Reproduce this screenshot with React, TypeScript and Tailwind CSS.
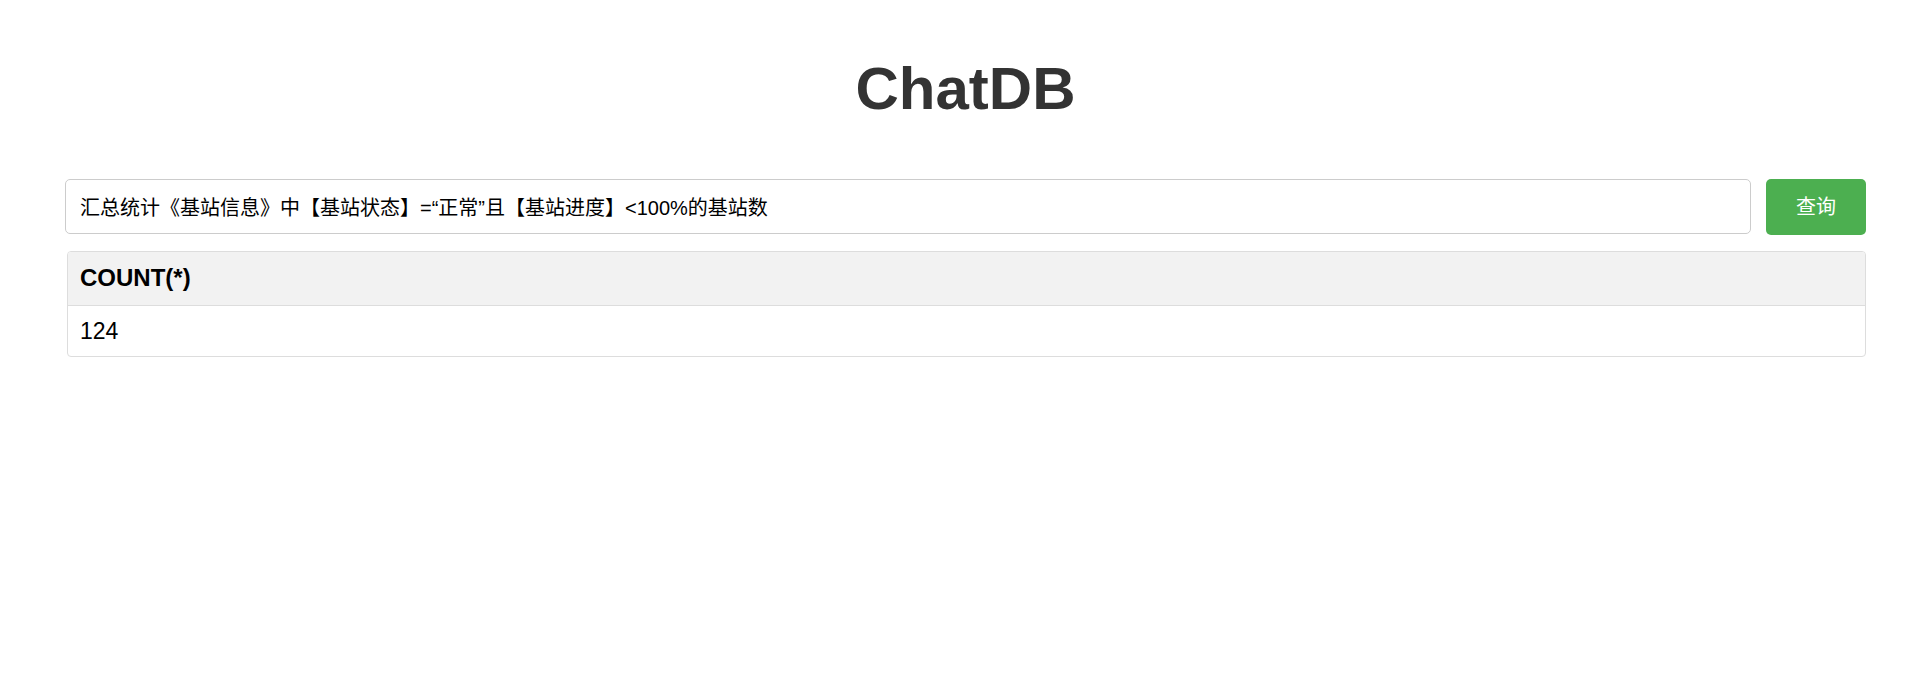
import React, { useState } from 'react';

const font = { fontFamily: '"Liberation Sans", "Noto Sans CJK SC", Arial, sans-serif' };

const App = () => {
  const [query, setQuery] = useState('汇总统计《基站信息》中【基站状态】=“正常”且【基站进度】<100%的基站数');
  const columns = ['COUNT(*)'];
  const rows = [[124]];

  return (
    <div className="min-h-screen bg-white" style={font}>
      <div className="w-[1801px] mx-auto">
        <h1 className="text-center text-[60px] leading-[67px] font-bold text-[#333] pt-[55px] mb-[57px]">ChatDB</h1>

        <div className="flex items-start gap-[15px]">
          <input
            value={query}
            onChange={(e) => setQuery(e.target.value)}
            className="flex-1 h-[55px] px-[14px] text-[20px] text-black border border-[#ccc] rounded-[5px] outline-none"
          />
          <button className="w-[100px] h-[56px] bg-[#4caf50] text-white text-[20px] rounded-[5px]">查询</button>
        </div>

        <div className="mt-4 ml-[2px] border border-[#ddd] rounded-[4px] overflow-hidden">
          <table className="w-full border-collapse text-left">
            <thead>
              <tr className="bg-[#f2f2f2] border-b border-[#ddd]">
                {columns.map((c) => (
                  <th key={c} className="h-[53px] px-[12px] text-[24px] font-bold text-black">{c}</th>
                ))}
              </tr>
            </thead>
            <tbody>
              {rows.map((r, i) => (
                <tr key={i}>
                  {r.map((v, j) => (
                    <td key={j} className="h-[51px] px-[12px] text-[23px] text-black">{v}</td>
                  ))}
                </tr>
              ))}
            </tbody>
          </table>
        </div>
      </div>
    </div>
  );
};

export default App;
